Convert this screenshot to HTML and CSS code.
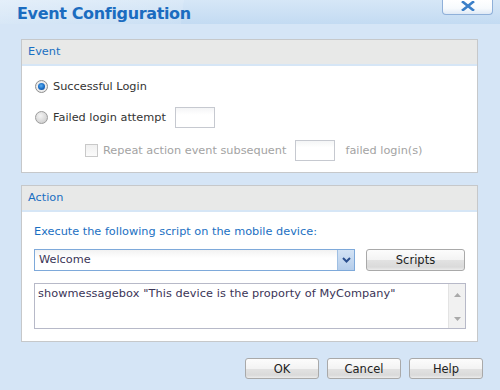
FILE: index.html
```html
<!DOCTYPE html>
<html>
<head>
<meta charset="utf-8">
<link rel="stylesheet" href="styles.css">
</head>
<body>
<div class="dialog">
  <div class="titlebar">
    <div class="title">Event Configuration</div>
    <div class="close">
      <svg width="14" height="10" viewBox="0 0 14 10"><path d="M2 1 L12 9 M12 1 L2 9" stroke="#3b7fc8" stroke-width="2.6" stroke-linecap="square"/></svg>
    </div>
  </div>

  <div class="panel event">
    <div class="panel-head">Event</div>
    <div class="panel-body event-body">
      <div class="row">
        <span class="radio checked"><span class="dot"></span></span>
        <span class="label">Successful Login</span>
      </div>
      <div class="row">
        <span class="radio"></span>
        <span class="label">Failed login attempt</span>
        <span class="textbox small first"></span>
      </div>
      <div class="row indent">
        <span class="checkbox"></span>
        <span class="label disabled">Repeat action event subsequent</span>
        <span class="textbox small second"></span>
        <span class="label disabled after">failed login(s)</span>
      </div>
    </div>
  </div>

  <div class="panel action">
    <div class="panel-head">Action</div>
    <div class="panel-body action-body">
      <div class="prompt">Execute the following script on the mobile device:</div>
      <div class="select-row">
        <div class="select">
          <span class="select-value">Welcome</span>
          <span class="select-arrow">
            <svg width="9" height="6" viewBox="0 0 9 6"><path d="M1 1 L4.5 4.5 L8 1" fill="none" stroke="#2b4f8e" stroke-width="2"/></svg>
          </span>
        </div>
        <div class="btn scripts">Scripts</div>
      </div>
      <div class="textarea">
        <div class="textarea-text">showmessagebox "This device is the proporty of MyCompany"</div>
        <div class="scrollbar">
          <svg width="7" height="4" viewBox="0 0 7 4"><path d="M0 4 L3.5 0 L7 4 Z" fill="#a9a9a9"/></svg>
          <svg width="7" height="4" viewBox="0 0 7 4"><path d="M0 0 L3.5 4 L7 0 Z" fill="#a9a9a9"/></svg>
        </div>
      </div>
    </div>
  </div>

  <div class="buttons">
    <div class="btn">OK</div>
    <div class="btn">Cancel</div>
    <div class="btn">Help</div>
  </div>
</div>
</body>
</html>
```

FILE: styles.css
```css
html, body {
  margin: 0;
  padding: 0;
}
body {
  width: 500px;
  height: 390px;
  background: #d5e5f6;
  font-family: "DejaVu Sans", Verdana, sans-serif;
  font-size: 11.3px;
  color: #333;
  overflow: hidden;
}
.dialog {
  display: flex;
  flex-direction: column;
  height: 390px;
}
.titlebar {
  height: 24px;
  display: flex;
  justify-content: space-between;
  align-items: flex-start;
  background:
    linear-gradient(97deg, rgba(255,255,255,0.35) 0, rgba(255,255,255,0.12) 36.5%, rgba(255,255,255,0) 36.6%),
    linear-gradient(to bottom, #d6e7f7, #c3dbf2);
}
.title {
  margin: 5px 0 0 17px;
  font-family: "DejaVu Sans", Verdana, sans-serif;
  font-weight: bold;
  font-size: 16px;
  letter-spacing: -0.35px;
  line-height: 18px;
  color: #1b6cc0;
}
.close {
  width: 49px;
  height: 14px;
  margin-right: 7px;
  border: 1px solid #8fb0d9;
  border-top: none;
  border-radius: 0 0 4px 4px;
  background: linear-gradient(to bottom, #ffffff 0, #f7fafd 60%, #dfe9f5 100%);
  display: flex;
  justify-content: center;
  align-items: center;
}
.close svg {
  margin-top: -2px;
}
.panel {
  margin-left: 21px;
  width: 457px;
  box-sizing: border-box;
  border: 1px solid #c6c8ca;
  background: #fff;
}
.event {
  margin-top: 15px;
  height: 134px;
}
.action {
  margin-top: 12px;
  height: 157px;
}
.panel-head {
  height: 24px;
  line-height: 24px;
  padding-left: 6px;
  background: #e8e9e8;
  border-bottom: 2px solid #d6e6f6;
  color: #1a6fc2;
}
.event-body {
  padding: 9px 0 0 13px;
  display: flex;
  flex-direction: column;
}
.row {
  display: flex;
  align-items: center;
  height: 22px;
}
.row + .row {
  margin-top: 9px;
}
.row.indent {
  margin-top: 11px;
  padding-left: 50px;
}
.radio {
  width: 13px;
  height: 13px;
  box-sizing: border-box;
  border-radius: 50%;
  border: 1px solid #9c9c9c;
  background: radial-gradient(circle at 40% 35%, #f4f4f4 0, #d8d8d8 60%, #c4c4c4 100%);
  display: flex;
  justify-content: center;
  align-items: center;
  margin-right: 5px;
}
.radio.checked {
  background: radial-gradient(circle at 50% 50%, #ffffff 0, #e9e9e9 70%, #d0d0d0 100%);
  border-color: #8e8e8e;
}
.dot {
  width: 7px;
  height: 7px;
  border-radius: 50%;
  background: radial-gradient(circle at 45% 40%, #5db0f0 0, #1b6fc8 50%, #0c3f82 100%);
}
.label {
  white-space: nowrap;
}
.disabled {
  color: #a3a3a3;
}
.checkbox {
  width: 13px;
  height: 13px;
  box-sizing: border-box;
  border: 1px solid #c9c9c9;
  background: linear-gradient(to bottom, #f0f0f0, #fbfbfb);
  margin-right: 5px;
}
.textbox.small {
  width: 40px;
  height: 21px;
  box-sizing: border-box;
  border: 1px solid #c6c9d0;
  background: linear-gradient(to bottom, #f4f5f6, #ffffff 35%);
}
.textbox.first {
  margin-left: 9px;
}
.textbox.second {
  margin-left: 9px;
}
.after {
  margin-left: 10px;
}
.action-body {
  padding: 12px 11px 0 12px;
  display: flex;
  flex-direction: column;
}
.prompt {
  color: #1a6fc2;
  line-height: 16px;
  height: 16px;
  white-space: nowrap;
}
.select-row {
  margin-top: 9px;
  display: flex;
  align-items: center;
  height: 22px;
}
.select {
  width: 321px;
  height: 22px;
  box-sizing: border-box;
  border: 1px solid #7ea9da;
  background: linear-gradient(to bottom, #f2f2f2 0, #ffffff 40%);
  display: flex;
  align-items: stretch;
}
.select-value {
  flex: 1;
  padding-left: 4px;
  line-height: 19px;
  color: #3a3456;
}
.select-arrow {
  width: 16px;
  border-left: 1px solid #9fbfe3;
  background: linear-gradient(to bottom, #d3e3f5, #b5cdea);
  display: flex;
  justify-content: center;
  align-items: center;
}
.btn {
  height: 22px;
  box-sizing: border-box;
  border: 1px solid #a9a9a9;
  border-radius: 3px;
  background: linear-gradient(to bottom, #fcfcfc 0, #f3f3f3 50%, #e2e2e2 52%, #dadada 85%, #ececec 100%);
  display: flex;
  justify-content: center;
  align-items: center;
  color: #222;
  font-size: 11.5px;
}
.scripts {
  width: 99px;
  margin-left: 11px;
}
.textarea {
  margin-top: 12px;
  width: 432px;
  height: 46px;
  box-sizing: border-box;
  border: 1px solid #b7b9c8;
  display: flex;
}
.textarea-text {
  flex: 1;
  padding: 3px 0 0 3px;
  color: #3a3456;
  white-space: nowrap;
  letter-spacing: 0.08px;
}
.scrollbar {
  width: 16px;
  background: #f1f1f1;
  border-left: 1px solid #e3e3e3;
  display: flex;
  flex-direction: column;
  justify-content: space-between;
  align-items: center;
  padding: 9px 0 7px;
}
.buttons {
  margin-top: 16px;
  padding-right: 17px;
  display: flex;
  justify-content: flex-end;
  gap: 8px;
}
.buttons .btn {
  width: 74px;
  height: 21px;
}
```
